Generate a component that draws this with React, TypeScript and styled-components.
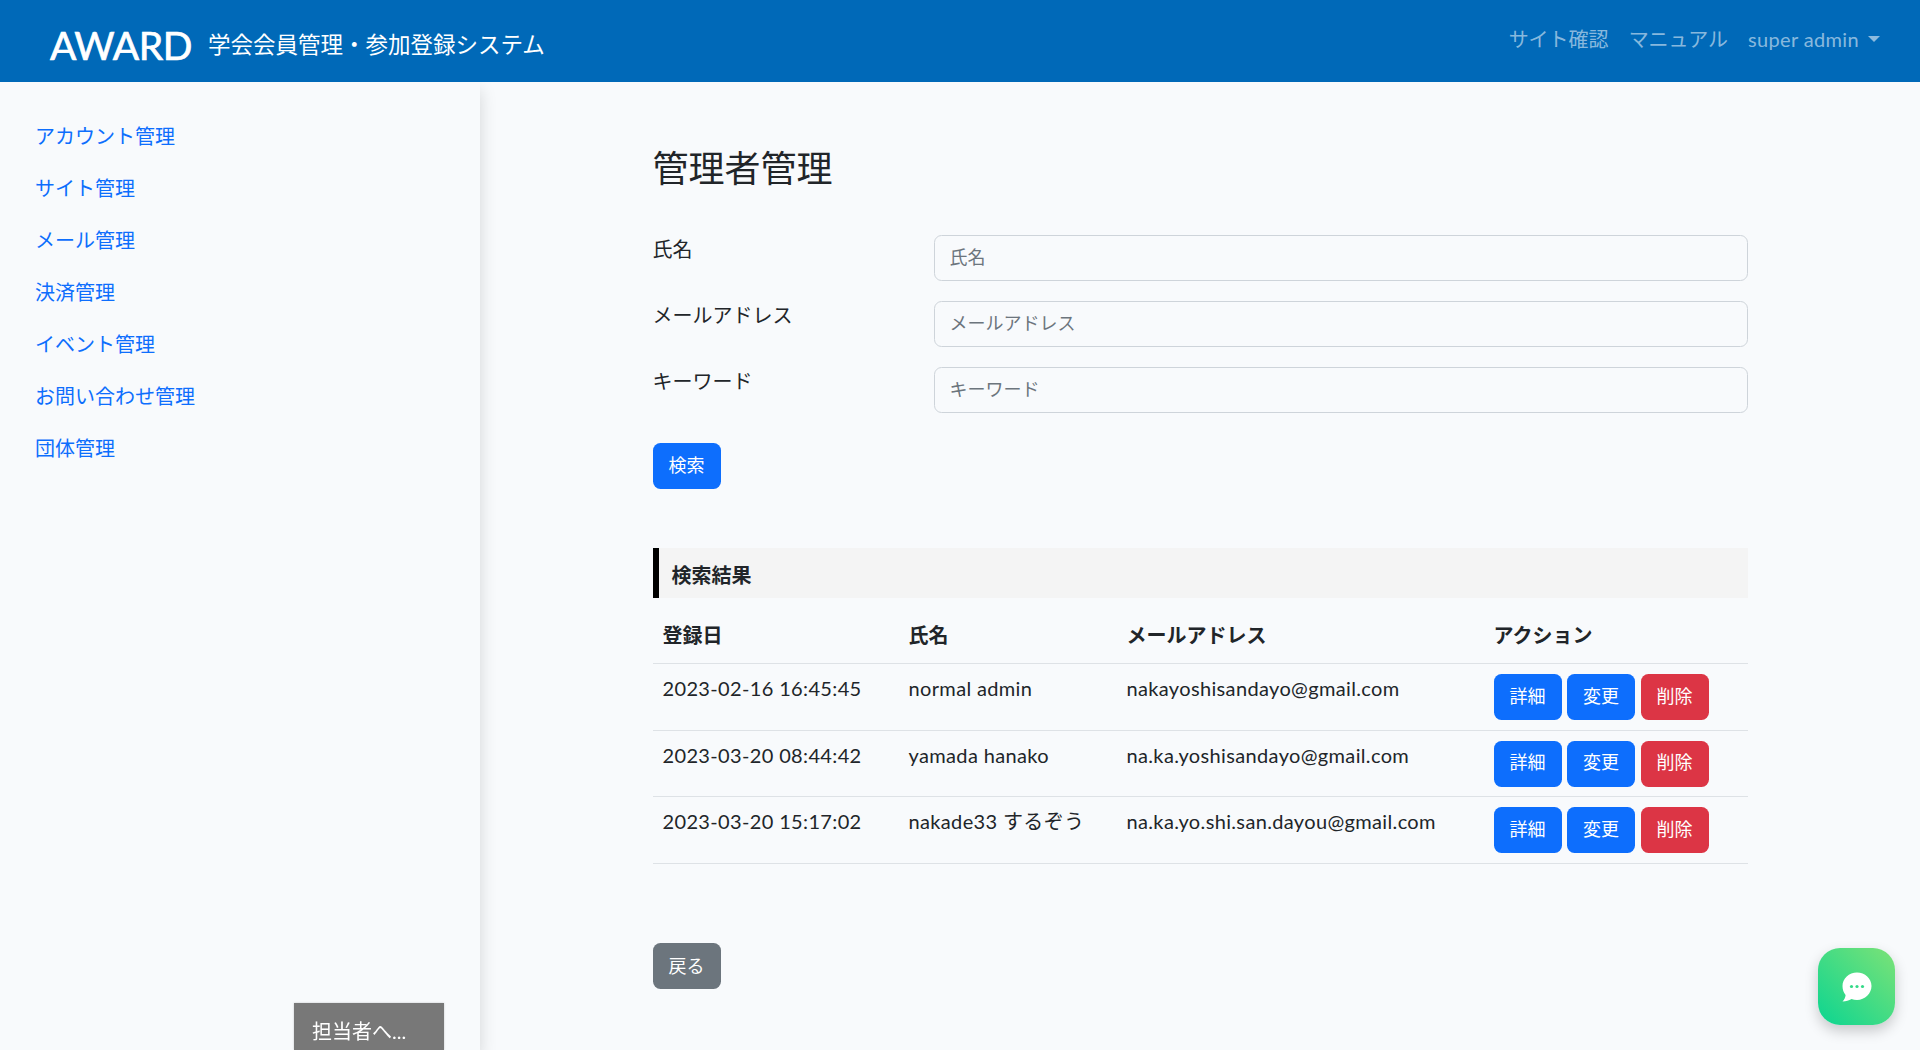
import React from "react";
import styled, { createGlobalStyle } from "styled-components";

const GlobalStyle = createGlobalStyle`
  html, body {
    margin: 0;
    padding: 0;
    height: 100%;
  }

  body {
    background-color: #f8fafc;
    color: #212529;
    font-family: Lato, "Noto Sans CJK JP", sans-serif;
    font-size: 18px;
    line-height: 1.6;
    overflow: hidden;
  }

  * {
    box-sizing: border-box;
  }
`;

const Header = styled.header`
  position: relative;
  z-index: 2;
  display: flex;
  align-items: center;
  justify-content: space-between;
  height: 82px;
  padding: 0 40px 0 50px;
  background-color: #0069b8;
`;

const Brand = styled.div`
  display: flex;
  align-items: center;
  gap: 16px;
  padding-top: 8px;
`;

const Logo = styled.span`
  font-family: Lato, sans-serif;
  font-size: 39px;
  line-height: 1;
  letter-spacing: -0.4px;
  color: #fff;
  -webkit-text-stroke: 0.7px #fff;
`;

const BrandTitle = styled.span`
  font-size: 22.5px;
  color: #fff;
`;

const TopNav = styled.nav`
  display: flex;
  align-items: center;
  gap: 20px;
  padding-bottom: 4px;
`;

const TopLink = styled.a`
  font-size: 20px;
  letter-spacing: ${(props: { $latin?: boolean }) => (props.$latin ? "0.35px" : "0")};
  color: rgba(255, 255, 255, 0.55);
  white-space: nowrap;
`;

const UserMenu = styled(TopLink)`
  display: flex;
  align-items: center;

  &::after {
    content: "";
    margin-left: 9px;
    border-top: 6px solid rgba(255, 255, 255, 0.55);
    border-left: 6px solid transparent;
    border-right: 6px solid transparent;
  }
`;

const Body = styled.div`
  display: flex;
  height: calc(100vh - 82px);
`;

const Sidebar = styled.aside`
  flex: 0 0 480px;
  padding: 28px 35px;
  box-shadow: 0 8px 16px rgba(0, 0, 0, 0.15);
`;

const SideLink = styled.a`
  display: block;
  height: 52px;
  font-size: 20px;
  line-height: 52px;
  color: #0d6efd;
`;

const Main = styled.main`
  flex: 1;
  padding-top: 65px;
`;

const Content = styled.div`
  width: 1095px;
  margin: 0 auto;
`;

const PageTitle = styled.h2`
  margin: 0 0 45px;
  font-size: 36px;
  font-weight: 400;
  line-height: 1.2;
`;

const FormRow = styled.div`
  display: flex;
  margin-bottom: 20px;
`;

const FieldLabel = styled.label`
  flex: 0 0 281px;
  font-size: 20px;
  line-height: 28px;
`;

const TextInput = styled.input`
  flex: 1;
  height: 46px;
  padding: 0 15px 2px;
  border: 1px solid #ced4da;
  border-radius: 7.5px;
  background-color: #f8fafc;
  font-family: inherit;
  font-size: 18px;

  &::placeholder {
    color: #6c757d;
  }
`;

const Button = styled.button`
  width: 68px;
  height: 46px;
  padding: 0 0 ${(props: { $variant?: string }) => (props.$variant === "secondary" ? "0" : "3px")};
  border: 0;
  border-radius: 7.5px;
  background-color: ${(props: { $variant?: string }) =>
    props.$variant === "danger"
      ? "#dc3545"
      : props.$variant === "secondary"
      ? "#6c757d"
      : "#0d6efd"};
  color: #fff;
  font-family: inherit;
  font-size: 18px;
  line-height: 1;
`;

const SearchActions = styled.div`
  margin-top: 30px;
`;

const ResultBar = styled.div`
  height: 50px;
  margin-top: 59px;
  padding-left: 13px;
  border-left: 6px solid #000;
  background-color: #f4f4f4;
  font-size: 20px;
  font-weight: 700;
  line-height: 54px;
`;

const Table = styled.table`
  width: 100%;
  margin-top: 13px;
  border-collapse: collapse;
  table-layout: fixed;
`;

const HeadCell = styled.th`
  padding: 8px 10px 12px;
  border-bottom: 1px solid #dee2e6;
  font-size: 20px;
  font-weight: 700;
  line-height: 32px;
  text-align: left;
`;

const Cell = styled.td`
  padding: 10px 10px 9.5px;
  border-bottom: 1px solid #dee2e6;
  font-size: 20px;
  letter-spacing: 0.35px;
  line-height: 28px;
  vertical-align: top;
  white-space: nowrap;
`;

const Actions = styled.div`
  display: flex;
  gap: 5.5px;
`;

const BackActions = styled.div`
  margin-top: 79.5px;
`;

const AssigneeTab = styled.div`
  position: fixed;
  left: 294px;
  bottom: 0;
  width: 150px;
  height: 47px;
  padding: 12px 0 0 18px;
  background-color: #787878;
  box-shadow: 0 0 2px rgba(0, 0, 0, 0.2);
  color: #fff;
  font-size: 20px;
  line-height: 32px;
`;

const ChatButton = styled.button`
  position: fixed;
  left: 1818px;
  top: 948px;
  display: flex;
  align-items: center;
  justify-content: center;
  width: 77px;
  height: 77px;
  padding: 0;
  border: 0;
  border-radius: 22px;
  background: linear-gradient(45deg, #0bd591, #7ce277);
  box-shadow: 0 6px 14px rgba(0, 0, 0, 0.2);
`;

const navItems = [
  "アカウント管理",
  "サイト管理",
  "メール管理",
  "決済管理",
  "イベント管理",
  "お問い合わせ管理",
  "団体管理",
];

const fields = ["氏名", "メールアドレス", "キーワード"];

const rows = [
  ["2023-02-16 16:45:45", "normal admin", "nakayoshisandayo@gmail.com"],
  ["2023-03-20 08:44:42", "yamada hanako", "na.ka.yoshisandayo@gmail.com"],
  ["2023-03-20 15:17:02", "nakade33 するぞう", "na.ka.yo.shi.san.dayou@gmail.com"],
];

const App: React.FC = () => {
  return (
    <>
      <GlobalStyle />
      <Header>
        <Brand>
          <Logo>AWARD</Logo>
          <BrandTitle>学会会員管理・参加登録システム</BrandTitle>
        </Brand>
        <TopNav>
          <TopLink>サイト確認</TopLink>
          <TopLink>マニュアル</TopLink>
          <UserMenu $latin>super admin</UserMenu>
        </TopNav>
      </Header>
      <Body>
        <Sidebar>
          {navItems.map((item) => (
            <SideLink key={item}>{item}</SideLink>
          ))}
        </Sidebar>
        <Main>
          <Content>
            <PageTitle>管理者管理</PageTitle>
            {fields.map((field) => (
              <FormRow key={field}>
                <FieldLabel>{field}</FieldLabel>
                <TextInput placeholder={field} />
              </FormRow>
            ))}
            <SearchActions>
              <Button>検索</Button>
            </SearchActions>
            <ResultBar>検索結果</ResultBar>
            <Table>
              <colgroup>
                <col style={{ width: 246 }} />
                <col style={{ width: 218 }} />
                <col style={{ width: 367 }} />
                <col style={{ width: 264 }} />
              </colgroup>
              <thead>
                <tr>
                  <HeadCell>登録日</HeadCell>
                  <HeadCell>氏名</HeadCell>
                  <HeadCell>メールアドレス</HeadCell>
                  <HeadCell>アクション</HeadCell>
                </tr>
              </thead>
              <tbody>
                {rows.map((row) => (
                  <tr key={row[0]}>
                    {row.map((value) => (
                      <Cell key={value}>{value}</Cell>
                    ))}
                    <Cell>
                      <Actions>
                        <Button>詳細</Button>
                        <Button>変更</Button>
                        <Button $variant="danger">削除</Button>
                      </Actions>
                    </Cell>
                  </tr>
                ))}
              </tbody>
            </Table>
            <BackActions>
              <Button $variant="secondary">戻る</Button>
            </BackActions>
          </Content>
        </Main>
      </Body>
      <AssigneeTab>担当者へ...</AssigneeTab>
      <ChatButton>
        <svg width="30" height="30" viewBox="0 0 30 30">
          <path
            fill="#fff"
            d="M15 .5C23 .5 29.5 6.5 29.5 14S23 28 15 28c-2 0-3.8-.4-5.5-1C7 28.3 4 29.5.5 29.5c2-2 3-4.5 3.1-6.5C1.6 20.6.5 17.5.5 14 .5 6.5 7 .5 15 .5Z"
          />
          <circle cx="9.5" cy="14.5" r="1.6" fill="#34da88" />
          <circle cx="15" cy="14.5" r="1.6" fill="#34da88" />
          <circle cx="20.5" cy="14.5" r="1.6" fill="#34da88" />
        </svg>
      </ChatButton>
    </>
  );
};

export default App;
